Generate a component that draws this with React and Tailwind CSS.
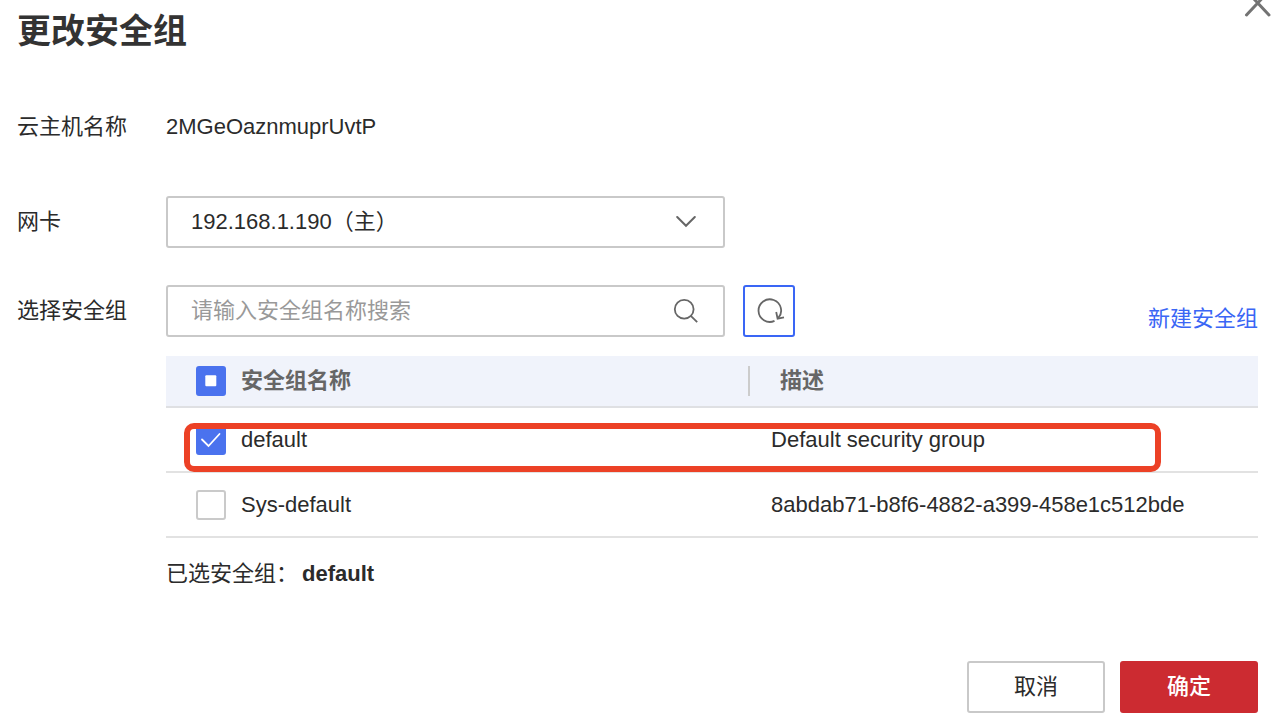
import { useEffect, useRef, useState } from "react";

const groups = [
  { id: "default", description: "Default security group" },
  { id: "Sys-default", description: "8abdab71-b8f6-4882-a399-458e1c512bde" },
];

function CheckBox({ label, checked, indeterminate = false, onChange }) {
  const ref = useRef(null);
  useEffect(() => {
    ref.current.indeterminate = indeterminate;
  }, [indeterminate]);
  return (
    <span className="grid size-[30px] shrink-0">
      <input
        ref={ref}
        type="checkbox"
        aria-label={label}
        checked={checked}
        onChange={onChange}
        className="col-start-1 row-start-1 size-[30px] appearance-none rounded-[3px] border-2 border-[#cacaca] bg-white checked:border-[#4a72ee] checked:bg-[#4a72ee] indeterminate:border-[#4a72ee] indeterminate:bg-[#4a72ee]"
      />
      <svg
        viewBox="0 0 30 30"
        className="pointer-events-none col-start-1 row-start-1 size-[30px]"
        aria-hidden="true"
      >
        {indeterminate && <rect x="9.3" y="9.3" width="11" height="11" rx="1" fill="#fff" />}
        {checked && !indeterminate && (
          <path
            d="M6 14.5l6.5 6.5L23.5 9"
            fill="none"
            stroke="#fff"
            strokeWidth="1.8"
            strokeLinecap="round"
          />
        )}
      </svg>
    </span>
  );
}

export default function App() {
  const [selected, setSelected] = useState(["default"]);
  const [query, setQuery] = useState("");
  const toggle = (id) =>
    setSelected((s) => (s.includes(id) ? s.filter((x) => x !== id) : [...s, id]));
  const all = selected.length === groups.length;

  return (
    <main
      lang="zh-CN"
      className="bg-white pb-3 pl-[17px] font-['Liberation_Sans','Noto_Sans_CJK_SC',sans-serif] text-[22px] leading-8 text-[#2b2b2b]"
    >
      <header className="flex items-start justify-between pr-2">
        <h1 className="pt-2 text-[34px] leading-[46px] font-bold text-[#333]">更改安全组</h1>
        <button type="button" aria-label="关闭" className="flex h-[18px] items-end overflow-hidden">
          <svg viewBox="0 0 28 28" className="size-7 shrink-0" aria-hidden="true">
            <path
              d="M2.5 1L25 25M25 1L2.5 25"
              stroke="#737373"
              strokeWidth="3"
              strokeLinecap="round"
            />
          </svg>
        </button>
      </header>

      <div className="grid grid-cols-[149px_minmax(0,1fr)] pr-[22px]">
        <span className="pt-[57px]">云主机名称</span>
        <span className="pt-[57px]">2MGeOaznmuprUvtP</span>

        <label htmlFor="nic" className="mt-[53px] leading-[52px]">
          网卡
        </label>
        <div className="relative mt-[53px] w-full max-w-[559px]">
          <select
            id="nic"
            className="block h-[52px] w-full appearance-none rounded-[3px] border-2 border-[#c9c9c9] bg-white pr-16 pl-[23px]"
          >
            <option>192.168.1.190（主）</option>
          </select>
          <svg
            viewBox="0 0 20 20"
            className="pointer-events-none absolute top-4 right-[29px] size-5"
            aria-hidden="true"
          >
            <path
              d="M1.2 5L10 13.8L18.8 5"
              fill="none"
              stroke="#666"
              strokeWidth="2"
              strokeLinecap="round"
            />
          </svg>
        </div>

        <label htmlFor="search" className="mt-[37px] leading-[52px]">
          选择安全组
        </label>
        <div className="mt-[37px] flex items-start gap-[18px]">
          <div className="relative w-full max-w-[559px]">
            <input
              id="search"
              type="text"
              value={query}
              onChange={(e) => setQuery(e.target.value)}
              placeholder="请输入安全组名称搜索"
              className="block h-[52px] w-full rounded-[3px] border-2 border-[#c9c9c9] pr-16 pl-[23px] placeholder:text-[#999]"
            />
            <svg
              viewBox="0 0 26 26"
              className="pointer-events-none absolute top-[13px] right-[26px] size-[26px]"
              aria-hidden="true"
            >
              <g fill="none" stroke="#666" strokeWidth="1.8">
                <circle cx="11.2" cy="11.2" r="9.4" />
                <path d="M17.8 17.8L24.2 24.2" />
              </g>
            </svg>
          </div>
          <button
            type="button"
            aria-label="刷新"
            className="flex size-[52px] shrink-0 items-center justify-center rounded-[3px] border-2 border-[#3a66f5]"
          >
            <svg viewBox="0 0 28 28" className="size-7 overflow-visible" aria-hidden="true">
              <g fill="none" stroke="#666" strokeWidth="1.8">
                <path d="M19.5 23.9A11.3 11.3 0 1 1 23.2 21.2" />
                <path d="M21.2 15L22.6 21.6L29 20.4" />
              </g>
            </svg>
          </button>
          <a href="#create" className="mt-[18px] ml-auto shrink-0 text-[#3a66f5]">
            新建安全组
          </a>
        </div>

        <div className="relative col-start-2 mt-[19px]">
          <table className="w-full table-fixed border-collapse text-left">
            <thead>
              <tr className="h-[51px] border-b-2 border-[#dfe0e3] bg-[#f0f3fb] text-[#666]">
                <th className="w-[53.3%] p-0 pl-[30px] font-bold">
                  <div className="flex items-center gap-[15px]">
                    <CheckBox
                      label="全选"
                      checked={all}
                      indeterminate={selected.length > 0 && !all}
                      onChange={() => setSelected(all ? [] : groups.map((g) => g.id))}
                    />
                    安全组名称
                  </div>
                </th>
                <th className="p-0 font-bold">
                  <div className="border-l-2 border-[#ccc] pl-[30px] leading-[30px]">描述</div>
                </th>
              </tr>
            </thead>
            <tbody>
              {groups.map((g) => (
                <tr key={g.id} className="h-[65px] border-b-2 border-[#e2e2e2]">
                  <td className="p-0 pl-[30px]">
                    <div className="flex items-center gap-[15px]">
                      <CheckBox
                        label={g.id}
                        checked={selected.includes(g.id)}
                        onChange={() => toggle(g.id)}
                      />
                      {g.id}
                    </div>
                  </td>
                  <td className="p-0 pl-[23px]">{g.description}</td>
                </tr>
              ))}
            </tbody>
          </table>
          <div className="pointer-events-none absolute top-[67px] right-[97px] left-[18px] h-[49px] rounded-[10px] border-6 border-[#ec4126]" />
        </div>

        <p className="col-start-2 mt-5">
          已选安全组：<strong className="ml-1 font-bold">{selected.join("、")}</strong>
        </p>
      </div>

      <footer className="mt-[71px] flex justify-end gap-[15px] pr-[22px]">
        <button type="button" className="h-[52px] w-[138px] rounded-[3px] border-2 border-[#c9c9c9] bg-white">
          取消
        </button>
        <button type="button" className="h-[52px] w-[138px] rounded-[3px] bg-[#cc2b31] font-medium text-white">
          确定
        </button>
      </footer>
    </main>
  );
}
